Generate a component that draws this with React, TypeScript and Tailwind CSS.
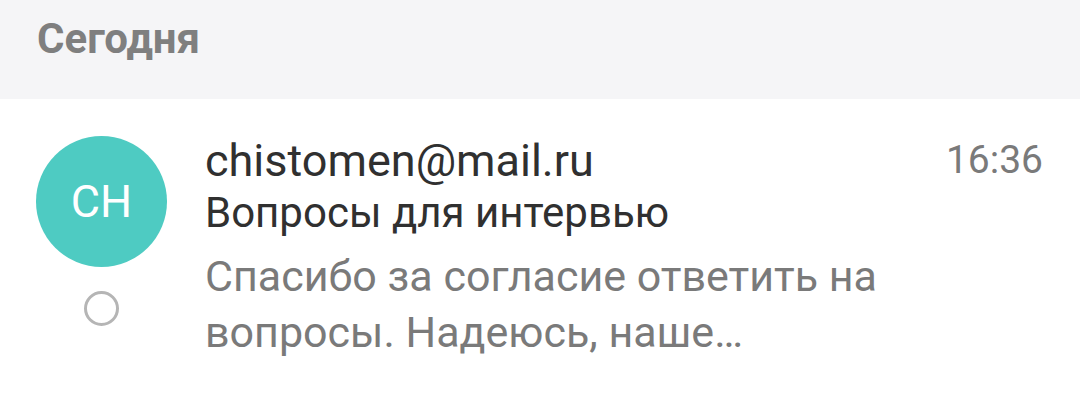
import React from 'react'

const MailItem = () => {
  return (
    <div className="flex pl-[36px] pr-[37px] pt-[37px]">
      <div className="flex flex-col items-center w-[131px] shrink-0">
        <div className="w-[131px] h-[131px] rounded-full bg-[#4ecbc2] flex items-center justify-center text-white text-[45px] leading-none">
          CH
        </div>
        <div className="mt-[24px] w-[35px] h-[35px] rounded-full border-[3px] border-[#b5b5b5]" />
      </div>
      <div className="flex-1 ml-[38px]">
        <div className="text-[45px] leading-[49px] text-[#303030]">chistomen@mail.ru</div>
        <div className="mt-[3px] text-[42px] leading-[49px] text-[#303030]">Вопросы для интервью</div>
        <div className="mt-[11px] text-[43px] leading-[56px] text-[#7a7a7a]">
          <div className="whitespace-nowrap">Спасибо за согласие ответить на</div>
          <div className="whitespace-nowrap">вопросы. Надеюсь, наше…</div>
        </div>
      </div>
      <div className="text-[39px] leading-[49px] text-[#7a7a7a]">16:36</div>
    </div>
  )
}

const App = () => {
  return (
    <div className="w-[1080px] h-[407px] bg-white overflow-hidden font-['Roboto',sans-serif]">
      <div className="h-[99px] bg-[#f5f5f7] pl-[37px] pt-[18px]">
        <span className="text-[42px] leading-none font-bold text-[#7f7f7f]">Сегодня</span>
      </div>
      <MailItem />
    </div>
  )
}

export default App
